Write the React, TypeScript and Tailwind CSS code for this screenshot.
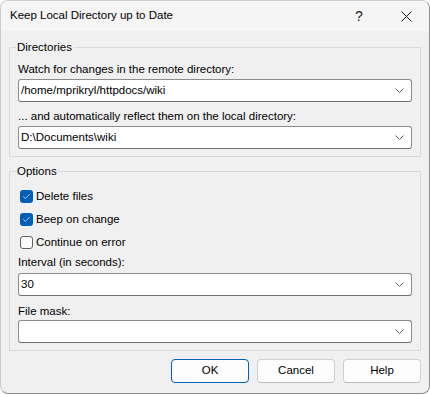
import { Check } from "lucide-react";

const font = { fontFamily: '"Liberation Sans", Arial, sans-serif' };

function Chevron() {
  return (
    <svg width="9" height="5" viewBox="0 0 9 5" className="shrink-0">
      <path d="M0.5 0.5 L4.5 4.5 L8.5 0.5" fill="none" stroke="#606060" strokeWidth="1" />
    </svg>
  );
}

function Combo({ value }: { value: string }) {
  return (
    <div className="w-[394px] h-[23px] bg-white border border-[#8d8d8d] border-b-[#6f6f6f] rounded-[3px] flex items-center pl-[2px] pr-[3px]">
      <span className="flex-1 text-[11.5px] text-black leading-none">{value}</span>
      <div className="w-[18px] flex justify-center">
        <Chevron />
      </div>
    </div>
  );
}

function CheckRow({ label, checked }: { label: string; checked: boolean }) {
  return (
    <div className="h-[23px] flex items-center pl-[2px]">
      {checked ? (
        <div className="w-[13px] h-[13px] rounded-[3px] bg-[#005fb8] flex items-center justify-center">
          <Check className="w-[9px] h-[9px] text-white" strokeWidth={1.75} />
        </div>
      ) : (
        <div className="w-[13px] h-[13px] rounded-[3px] border border-[#616161] bg-[#fbfbfb]" />
      )}
      <span className="ml-[3px] text-[11.5px] text-black">{label}</span>
    </div>
  );
}

function Group({ title, children }: { title: string; children: React.ReactNode }) {
  return (
    <div className="relative w-[412px] ml-[8px] border border-[#d9d9d9] px-[8px] pb-[7px] pt-[13px]">
      {/* legend sits on the top border */}
      <span className="absolute left-[6px] -top-[9px] bg-[#f0f0f0] px-[1px] text-[11.5px] leading-[16px] text-black">
        {title}
      </span>
      {children}
    </div>
  );
}

function Button({ label, primary }: { label: string; primary?: boolean }) {
  return (
    <button
      className={`w-[78px] h-[24px] rounded-[4px] bg-[#fdfdfd] text-[11.5px] text-black ${
        primary ? "border border-[#005fb8]" : "border border-[#d0d0d0] border-b-[#bcbcbc]"
      }`}
    >
      {label}
    </button>
  );
}

export default function App() {
  return (
    <div className="w-[430px] h-[395px] bg-white" style={font}>
      <div className="w-[430px] h-[394px] rounded-lg border border-[#cccccc] border-r-[#8e8e8e] border-b-[#8e8e8e] bg-[#f0f0f0] overflow-hidden flex flex-col">
        {/* Title bar */}
        <div className="h-[30px] bg-[#f5f5f5] flex items-center pl-[9px] shrink-0">
          <span className="text-[11.5px] text-black flex-1">Keep Local Directory up to Date</span>
          <span className="text-[14px] text-[#1a1a1a] w-[10px] text-center mr-[37px]">?</span>
          <svg width="11" height="11" viewBox="0 0 11 11" className="mr-[17px]">
            <path d="M0.5 0.5 L10.5 10.5 M10.5 0.5 L0.5 10.5" stroke="#1a1a1a" strokeWidth="1" />
          </svg>
        </div>

        {/* Body */}
        <div className="pt-[16px]">
          <Group title="Directories">
            <div className="text-[11.5px] leading-[16px] text-black">Watch for changes in the remote directory:</div>
            <div className="mt-[2px]">
              <Combo value="/home/mprikryl/httpdocs/wiki" />
            </div>
            <div className="mt-[6px] text-[11.5px] leading-[16px] text-black">
              ... and automatically reflect them on the local directory:
            </div>
            <div className="mt-[2px]">
              <Combo value="D:\Documents\wiki" />
            </div>
          </Group>

          <div className="mt-[14px]">
            <Group title="Options">
              <CheckRow label="Delete files" checked />
              <CheckRow label="Beep on change" checked />
              <CheckRow label="Continue on error" checked={false} />
              <div className="text-[11.5px] leading-[16px] text-black">Interval (in seconds):</div>
              <div className="mt-[3px]">
                <Combo value="30" />
              </div>
              <div className="mt-[7px] text-[11.5px] leading-[16px] text-black">File mask:</div>
              <div className="mt-[1px]">
                <Combo value="" />
              </div>
            </Group>
          </div>

          <div className="mt-[8px] flex justify-end gap-[8px] pr-[8px]">
            <Button label="OK" primary />
            <Button label="Cancel" />
            <Button label="Help" />
          </div>
        </div>
      </div>
    </div>
  );
}
